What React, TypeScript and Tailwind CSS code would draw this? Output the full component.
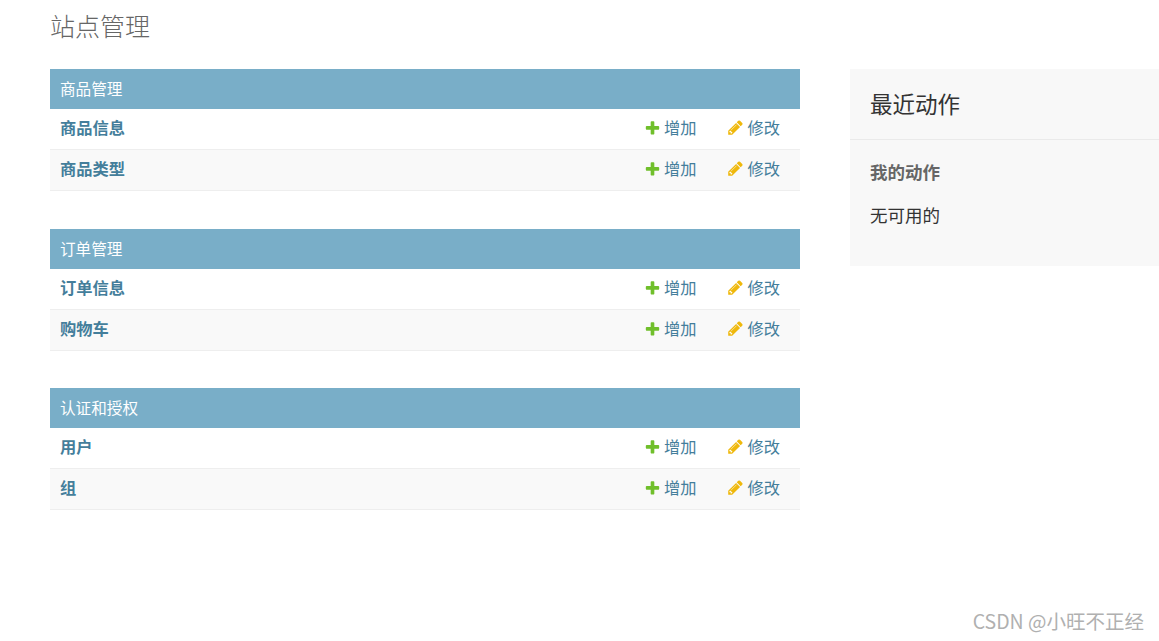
const FONT = "font-['Noto_Sans_CJK_SC','Liberation_Sans',sans-serif]";

const modules = [
  { title: "商品管理", rows: ["商品信息", "商品类型"], gap: "mb-[38px]" },
  { title: "订单管理", rows: ["订单信息", "购物车"], gap: "mb-[37px]" },
  { title: "认证和授权", rows: ["用户", "组"], gap: "" },
];

function PlusIcon() {
  return (
    <svg viewBox="0 0 1792 1792" className="h-[17px] w-[17px] shrink-0 translate-y-px fill-[#70bf2b]">
      <path d="M1600 736v192q0 40-28 68t-68 28h-416v416q0 40-28 68t-68 28h-192q-40 0-68-28t-28-68v-416h-416q-40 0-68-28t-28-68v-192q0-40 28-68t68-28h416v-416q0-40 28-68t68-28h192q40 0 68 28t28 68v416h416q40 0 68 28t28 68z" />
    </svg>
  );
}

function PencilIcon() {
  return (
    <svg viewBox="0 0 1792 1792" className="h-[17px] w-[17px] shrink-0 fill-[#efb80b]">
      <path d="M491 1536l91-91-235-235-91 91v107h128v128h107zm523-928q0-22-22-22-10 0-17 7l-542 542q-7 7-7 17 0 22 22 22 10 0 17-7l542-542q7-7 7-17zm-54-192l416 416-832 832h-416v-416zm683 96q0 53-37 90l-166 166-416-416 166-165q36-38 90-38 53 0 91 38l235 234q37 39 37 91z" />
    </svg>
  );
}

function Row({ name, alt }: { name: string; alt: boolean }) {
  return (
    <div
      className={`flex h-[41px] items-center border-b border-[#eeeeee] pb-[4px] pl-[10px] pr-5 text-[16.25px] text-[#447e9b] ${
        alt ? "bg-[#f9f9f9]" : "bg-white"
      }`}
    >
      <span className="flex-1 font-bold">{name}</span>
      <span className="flex items-center gap-[3px]">
        <PlusIcon />
        <span>增加</span>
      </span>
      <span className="ml-[30px] flex items-center gap-[4px]">
        <PencilIcon />
        <span>修改</span>
      </span>
    </div>
  );
}

export default function App() {
  return (
    <div className={`relative h-[641px] w-[1159px] overflow-hidden bg-white ${FONT}`}>
      <div className="flex pl-[50px]">
        <div className="w-[750px]">
          <h1 className="mb-[27px] h-[42px] pt-[6px] text-[25px] leading-[38px] font-light text-[#666666]">
            站点管理
          </h1>
          {modules.map((m) => (
            <div key={m.title} className={m.gap}>
              <div className="flex h-10 items-center bg-[#79aec8] pl-[10px] text-[15.6px] text-white">
                {m.title}
              </div>
              {m.rows.map((r, i) => (
                <Row key={r} name={r} alt={i % 2 === 1} />
              ))}
            </div>
          ))}
        </div>
        <aside className="mt-[69px] ml-[50px] h-[197px] w-[309px] bg-[#f8f8f8]">
          <h2 className="flex h-[71px] items-center border-b border-[#eaeaea] pl-5 text-[22.5px] font-normal text-[#333333]">
            最近动作
          </h2>
          <div className="pl-5">
            <h3 className="mt-[19px] text-[17.5px] leading-[26px] font-bold text-[#666666]">
              我的动作
            </h3>
            <p className="mt-[17px] text-[17.5px] leading-[26px] text-[#333333]">无可用的</p>
          </div>
        </aside>
      </div>
      <div className="absolute top-[607px] right-[15px] text-[19.5px] leading-[28px] text-[#b0b0b0]">
        CSDN @小旺不正经
      </div>
    </div>
  );
}
